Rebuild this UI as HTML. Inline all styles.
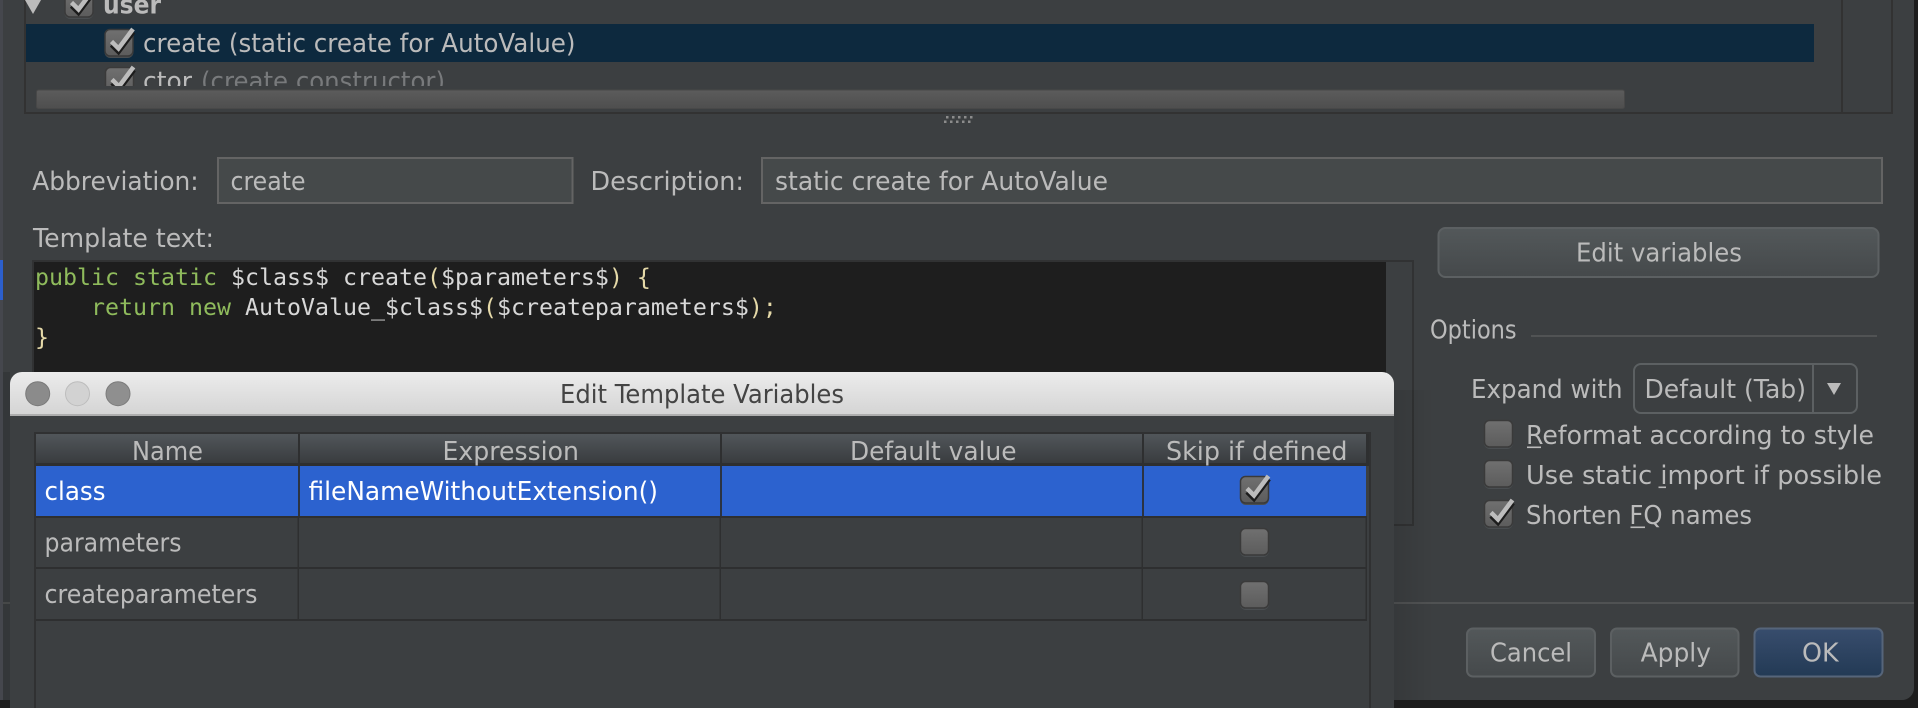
<!DOCTYPE html>
<html>
<head>
<meta charset="utf-8">
<style>
html,body{margin:0;padding:0;background:#1d1d1d;width:1918px;height:708px;overflow:hidden}
svg{display:block}
text{font-family:"DejaVu Sans","Liberation Sans",sans-serif;font-size:26px;fill:#bbbbbb}
.m{font-family:"DejaVu Sans Mono","Liberation Mono",monospace;font-size:23.25px;fill:#d8d8d8}
</style>
</head>
<body>
<svg width="1918" height="708" viewBox="0 0 1918 708" xmlns="http://www.w3.org/2000/svg">
<defs>
<linearGradient id="btn" x1="0" y1="0" x2="0" y2="1"><stop offset="0" stop-color="#53585a"/><stop offset="1" stop-color="#45494b"/></linearGradient>
<linearGradient id="ok" x1="0" y1="0" x2="0" y2="1"><stop offset="0" stop-color="#384d6d"/><stop offset="1" stop-color="#233a55"/></linearGradient>
<linearGradient id="sb" x1="0" y1="0" x2="0" y2="1"><stop offset="0" stop-color="#5c5c5c"/><stop offset="1" stop-color="#4e4e4e"/></linearGradient>
<linearGradient id="tb" x1="0" y1="0" x2="0" y2="1"><stop offset="0" stop-color="#ececec"/><stop offset="1" stop-color="#d4d4d4"/></linearGradient>
<linearGradient id="hd" x1="0" y1="0" x2="0" y2="1"><stop offset="0" stop-color="#51565a"/><stop offset="1" stop-color="#393c3f"/></linearGradient>
<linearGradient id="cb" x1="0" y1="0" x2="0" y2="1"><stop offset="0" stop-color="#707070"/><stop offset="1" stop-color="#5c5c5c"/></linearGradient>
<linearGradient id="shadow" x1="0" y1="0" x2="1" y2="0"><stop offset="0" stop-color="#000" stop-opacity=".1"/><stop offset="1" stop-color="#000" stop-opacity="0"/></linearGradient>
<g id="box">
<rect x="0" y="0" width="29" height="29" rx="6" fill="#4a4e51"/>
<rect x="0.5" y="0.5" width="28" height="26.5" rx="5" fill="url(#cb)" stroke="#3a3a3a" stroke-width="1.5"/>
</g>
<g id="chk">
<use href="#box"/>
<path d="M7 16 L14 23 L29 3" fill="none" stroke="#1c1c1c" stroke-width="4.5"/>
<path d="M7 12.5 L14 19.5 L28.5 0" fill="none" stroke="#bdbdbd" stroke-width="4.5"/>
</g>
<clipPath id="listclip"><rect x="26" y="0" width="1815" height="86"/></clipPath>
</defs>

<!-- main dialog -->
<rect x="0" y="0" width="3" height="708" fill="#45474d"/>
<rect x="0" y="260" width="3" height="40" fill="#2c5fcc"/>
<path d="M3 0 H1914 V688 a12 12 0 0 1 -12 12 H3 Z" fill="#3c3f41"/>

<!-- tree list -->
<rect x="25" y="-2" width="1867" height="115" fill="none" stroke="#323232" stroke-width="2"/>
<rect x="1841" y="0" width="2" height="113" fill="#323232"/>
<rect x="26" y="24" width="1788" height="38" fill="#0d293e"/>
<path d="M25 0 H41 L33 14 Z" fill="#bbbbbb"/>
<use href="#chk" x="64.5" y="-10"/>
<text x="103" y="13.5" textLength="58" lengthAdjust="spacingAndGlyphs" style="font-weight:bold">user</text>
<use href="#chk" x="104.5" y="29"/>
<text x="143" y="52" textLength="432.5" lengthAdjust="spacingAndGlyphs">create (static create for AutoValue)</text>
<g clip-path="url(#listclip)">
<use href="#chk" x="105" y="67"/>
<text x="143" y="90" textLength="49" lengthAdjust="spacingAndGlyphs">ctor</text>
<text x="201" y="90" textLength="244" lengthAdjust="spacingAndGlyphs" style="fill:#787a7c">(create constructor)</text>
</g>
<rect x="36.5" y="90" width="1588" height="18.5" rx="2" fill="url(#sb)" stroke="#484848"/>

<!-- grip -->
<g fill="#8c8c8c">
<rect x="946" y="116" width="2.5" height="2.5"/><rect x="952" y="116" width="2.5" height="2.5"/><rect x="958" y="116" width="2.5" height="2.5"/><rect x="964" y="116" width="2.5" height="2.5"/><rect x="970" y="116" width="2.5" height="2.5"/>
<rect x="944" y="120.5" width="2.5" height="2.5"/><rect x="950" y="120.5" width="2.5" height="2.5"/><rect x="956" y="120.5" width="2.5" height="2.5"/><rect x="962" y="120.5" width="2.5" height="2.5"/><rect x="968" y="120.5" width="2.5" height="2.5"/>
</g>

<!-- fields -->
<text x="32.2" y="190" textLength="166.5" lengthAdjust="spacingAndGlyphs">Abbreviation:</text>
<rect x="218" y="158" width="354.5" height="45" fill="#45494a" stroke="#646464" stroke-width="2"/>
<text x="230.5" y="190" textLength="75" lengthAdjust="spacingAndGlyphs">create</text>
<text x="590.5" y="190" textLength="153.5" lengthAdjust="spacingAndGlyphs">Description:</text>
<rect x="762" y="158" width="1120" height="45" fill="#45494a" stroke="#646464" stroke-width="2"/>
<text x="775" y="190" textLength="333" lengthAdjust="spacingAndGlyphs">static create for AutoValue</text>
<text x="33" y="247" textLength="181" lengthAdjust="spacingAndGlyphs">Template text:</text>

<!-- editor -->
<rect x="32" y="260" width="1382" height="266" fill="#313233"/>
<rect x="34" y="262" width="1352" height="262" fill="#1e1e1e"/>
<rect x="1386" y="262" width="26" height="262" fill="#3c3f41"/>
<text class="m" x="35" y="285" xml:space="preserve"><tspan style="fill:#8fbb5c">public static</tspan> $class$ create<tspan style="fill:#e5d9a8">(</tspan>$parameters$<tspan style="fill:#e5d9a8">) {</tspan></text>
<text class="m" x="91" y="315" xml:space="preserve"><tspan style="fill:#8fbb5c">return new</tspan> AutoValue_$class$<tspan style="fill:#e5d9a8">(</tspan>$createparameters$<tspan style="fill:#e5d9a8">);</tspan></text>
<text class="m" x="35" y="345" style="fill:#e5d9a8">}</text>

<!-- right column -->
<rect x="1438.5" y="228" width="440" height="49" rx="7" fill="url(#btn)" stroke="#5c6062" stroke-width="2"/>
<text x="1576" y="261.5" textLength="166" lengthAdjust="spacingAndGlyphs">Edit variables</text>
<text x="1430" y="338.5" textLength="86.6" lengthAdjust="spacingAndGlyphs">Options</text>
<rect x="1531" y="335" width="346" height="2" fill="#515354"/>
<text x="1471" y="398" textLength="151.6" lengthAdjust="spacingAndGlyphs">Expand with</text>
<rect x="1634" y="364" width="223" height="49" rx="7" fill="#3c3f41" stroke="#5c6062" stroke-width="2"/>
<rect x="1812" y="364" width="2" height="49" fill="#5c6062"/>
<text x="1644.5" y="398" textLength="161.5" lengthAdjust="spacingAndGlyphs">Default (Tab)</text>
<path d="M1827 383 H1841 L1834 395 Z" fill="#bbbbbb"/>

<use href="#box" x="1484" y="420"/>
<text x="1526" y="444" textLength="348" lengthAdjust="spacingAndGlyphs">Reformat according to style</text>
<rect x="1527" y="446.5" width="14" height="1.6" fill="#bbbbbb"/>
<use href="#box" x="1484" y="460"/>
<text x="1526" y="484" textLength="356" lengthAdjust="spacingAndGlyphs">Use static import if possible</text>
<rect x="1658.5" y="486.5" width="7.5" height="1.6" fill="#bbbbbb"/>
<use href="#chk" x="1484" y="500"/>
<text x="1526" y="524" textLength="226" lengthAdjust="spacingAndGlyphs">Shorten FQ names</text>
<rect x="1630.5" y="526.5" width="14.5" height="1.6" fill="#bbbbbb"/>

<rect x="3" y="602" width="1911" height="2" fill="#505253"/>

<rect x="1467" y="628.5" width="128" height="48" rx="6" fill="url(#btn)" stroke="#5c6062" stroke-width="2"/>
<text x="1490" y="661.5" textLength="82" lengthAdjust="spacingAndGlyphs">Cancel</text>
<rect x="1611" y="628.5" width="127.5" height="48" rx="6" fill="url(#btn)" stroke="#5c6062" stroke-width="2"/>
<text x="1640.6" y="661.5" textLength="70.4" lengthAdjust="spacingAndGlyphs">Apply</text>
<rect x="1754.5" y="628.5" width="128" height="48" rx="6" fill="url(#ok)" stroke="#56657a" stroke-width="2"/>
<text x="1802" y="661.5" textLength="36.6" lengthAdjust="spacingAndGlyphs">OK</text>

<!-- left under-modal shade -->
<rect x="3" y="372" width="7" height="336" fill="#000" opacity=".12"/>
<rect x="1394" y="390" width="40" height="310" fill="url(#shadow)"/>
<rect x="0" y="700" width="1394" height="8" fill="#1e1e1e"/>

<!-- modal -->
<rect x="10" y="414" width="1384" height="294" fill="#3c3f41"/>
<path d="M10 415 V384 a12 12 0 0 1 12 -12 H1382 a12 12 0 0 1 12 12 V415 Z" fill="url(#tb)"/>
<rect x="10" y="414" width="1384" height="2" fill="#adadad"/>
<circle cx="37.7" cy="393.7" r="12" fill="#8b8b8b" stroke="#7a7a7a"/>
<circle cx="77.5" cy="393.7" r="12" fill="#d2d2d2" stroke="#bdbdbd"/>
<circle cx="118" cy="393.7" r="12" fill="#8f8f8f" stroke="#7c7c7c"/>
<text x="560" y="403" textLength="284" lengthAdjust="spacingAndGlyphs" style="fill:#444444">Edit Template Variables</text>

<!-- table -->
<rect x="34" y="432" width="2" height="276" fill="#303132"/>
<rect x="1369" y="432" width="2" height="276" fill="#303132"/>
<rect x="34" y="432" width="1337" height="2" fill="#303132"/>
<rect x="36" y="434" width="1330" height="29" fill="url(#hd)"/>
<rect x="1366" y="434" width="3" height="29" fill="#2e2f30"/>
<rect x="36" y="463" width="1333" height="3" fill="#2e2f30"/>
<g fill="#2e2f30">
<rect x="298" y="434" width="2" height="29"/><rect x="720" y="434" width="2" height="29"/><rect x="1142" y="434" width="2" height="29"/>
</g>
<text x="132" y="460" textLength="71" lengthAdjust="spacingAndGlyphs">Name</text>
<text x="442.5" y="460" textLength="136.5" lengthAdjust="spacingAndGlyphs">Expression</text>
<text x="850" y="460" textLength="166.5" lengthAdjust="spacingAndGlyphs">Default value</text>
<text x="1166" y="460" textLength="181.5" lengthAdjust="spacingAndGlyphs">Skip if defined</text>

<rect x="36" y="466" width="1330" height="50" fill="#2c62cf"/>
<g fill="#2b3342">
<rect x="298" y="466" width="2" height="50"/><rect x="720" y="466" width="2" height="50"/><rect x="1142" y="466" width="2" height="50"/>
</g>
<g fill="#2e2f30">
<rect x="36" y="516" width="1331" height="2"/>
<rect x="36" y="567" width="1331" height="2"/>
<rect x="36" y="619" width="1331" height="2"/>
<rect x="297.5" y="518" width="1.5" height="101"/>
<rect x="719.5" y="518" width="1.5" height="101"/>
<rect x="1141.5" y="518" width="1.5" height="101"/>
<rect x="1365.5" y="518" width="1.5" height="101"/>
</g>
<text x="44.5" y="500" textLength="61" lengthAdjust="spacingAndGlyphs" style="fill:#ffffff">class</text>
<text x="308.5" y="500" textLength="349.5" lengthAdjust="spacingAndGlyphs" style="fill:#ffffff">fileNameWithoutExtension()</text>
<text x="44.5" y="551.5" textLength="137" lengthAdjust="spacingAndGlyphs">parameters</text>
<text x="44.5" y="603" textLength="213" lengthAdjust="spacingAndGlyphs">createparameters</text>
<use href="#chk" x="1240" y="476"/>
<use href="#box" x="1240" y="528"/>
<use href="#box" x="1240" y="581"/>
</svg>
</body>
</html>
